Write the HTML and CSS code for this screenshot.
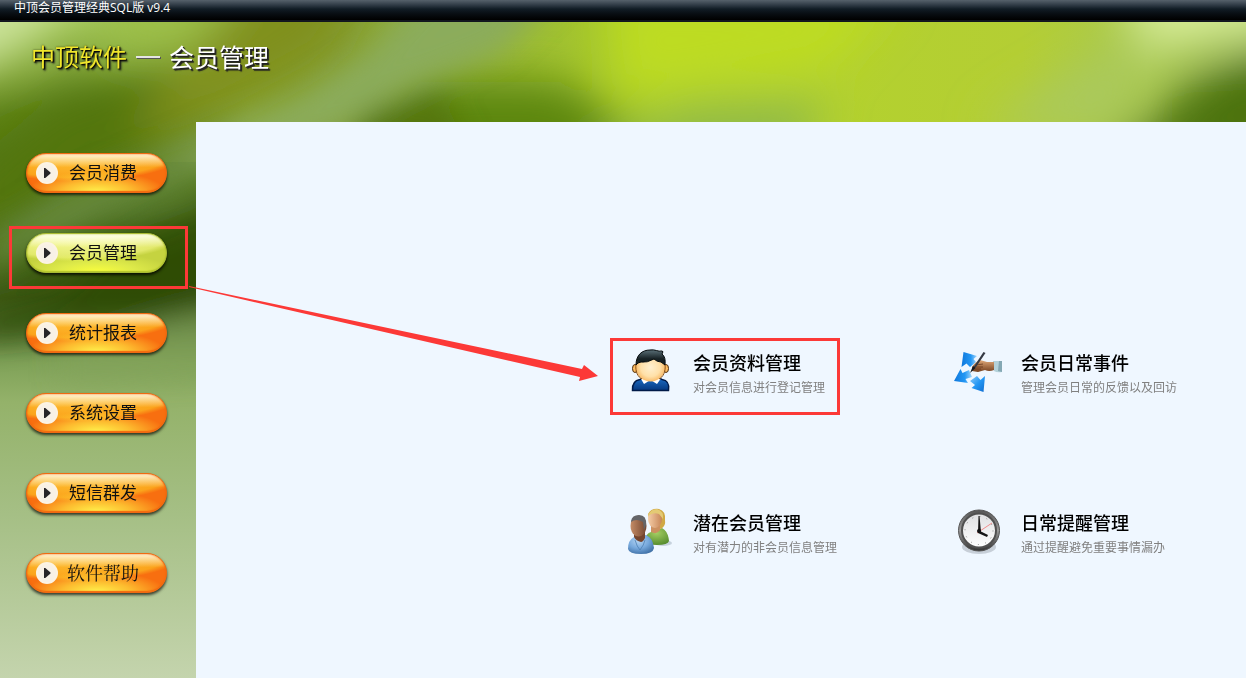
FILE: index.html
```html
<!DOCTYPE html>
<html lang="zh-CN">
  <head>
    <meta charset="UTF-8" />
    <meta name="viewport" content="width=device-width, initial-scale=1.0" />
    <title>中顶会员管理经典SQL版 v9.4</title>
    <link rel="stylesheet" href="styles.css">
  </head>

  <body>
    <div class="titlebar">中顶会员管理经典SQL版 v9.4</div>

    <div class="window">
      <!-- soft green backdrop behind the banner and the menu -->
      <svg class="backdrop" viewBox="0 0 1246 656" preserveAspectRatio="none" aria-hidden="true">
        <defs>
          <linearGradient id="side" x1="0" y1="0" x2="0" y2="1">
            <stop offset="0" stop-color="#9cc050" />
            <stop offset="0.07" stop-color="#83a638" />
            <stop offset="0.14" stop-color="#5f8418" />
            <stop offset="0.2" stop-color="#567a14" />
            <stop offset="0.29" stop-color="#4d7020" />
            <stop offset="0.36" stop-color="#3c5c0c" />
            <stop offset="0.42" stop-color="#3c5814" />
            <stop offset="0.47" stop-color="#5c7c3c" />
            <stop offset="0.52" stop-color="#80a258" />
            <stop offset="0.58" stop-color="#94b26a" />
            <stop offset="0.75" stop-color="#a5bf85" />
            <stop offset="1" stop-color="#c4d4ad" />
          </linearGradient>
          <linearGradient id="top" x1="0" y1="0" x2="1" y2="0">
            <stop offset="0.1" stop-color="#85a02c" stop-opacity="0" />
            <stop offset="0.2" stop-color="#85a02c" />
            <stop offset="0.27" stop-color="#86a036" />
            <stop offset="0.36" stop-color="#92b03c" />
            <stop offset="0.5" stop-color="#a9cb2a" />
            <stop offset="0.62" stop-color="#b3d22c" />
            <stop offset="0.82" stop-color="#b4ce34" />
            <stop offset="0.92" stop-color="#a9c84e" />
            <stop offset="1" stop-color="#86a838" />
          </linearGradient>
          <filter id="b14" x="-50%" y="-50%" width="200%" height="200%"><feGaussianBlur stdDeviation="14" /></filter>
          <filter id="b22" x="-50%" y="-50%" width="200%" height="200%"><feGaussianBlur stdDeviation="22" /></filter>
        </defs>
        <rect width="1246" height="656" fill="url(#side)" />
        <rect width="1246" height="140" fill="url(#top)" />
        <g filter="url(#b22)">
          <path d="M-60 -60H110L30 20L-60 70z" fill="#cbe29a" />
          <path d="M130 -40H300L230 20L100 35z" fill="#9dc048" />
          <path d="M-40 150L60 70L170 45L200 100L100 160L-40 240z" fill="#527610" />
          <path d="M260 -50H370L330 30L220 90L130 120L150 80z" fill="#80901c" />
          <path d="M360 130L420 60L560 60L640 110L600 150H370z" fill="#5c860c" />
          <path d="M600 120L690 85L830 78L790 140H590z" fill="#8fb94a" />
          <path d="M610 -30H900L830 45L620 75z" fill="#bddc22" />
          <path d="M1010 85L1150 5L1130 110H980z" fill="#aac95c" />
          <path d="M1110 -50H1300V15L1150 30z" fill="#d4ea94" />
          <path d="M1200 60L1290 15V140H1100z" fill="#4c7210" />
        </g>
        <g filter="url(#b14)">
          <path d="M425 -30H560L500 30L410 65L330 110L210 150L160 130L300 75L370 30z" fill="#8bac5c" />
          <path d="M330 140L370 90L440 70L470 130z" fill="#54760e" />
          <path d="M240 95L190 165L100 195L-20 260L-10 215L60 170L170 125z" fill="#71914c" opacity="0.700" />
          <path d="M240 170L120 222L60 270L-20 290V320L230 290z" fill="#2a4700" opacity="0.700" />
          <path d="M60 330L230 280V350L60 360z" fill="#83a45c" opacity="0.600" />
        </g>
      </svg>

      <header class="banner">
        <h1><span class="brand">中顶软件</span><span class="dash"></span><span class="module">会员管理</span></h1>
      </header>

      <div class="body">
        <nav class="menu">
          <button type="button"><i class="play"></i><span>会员消费</span></button>
          <button type="button" class="active"><i class="play"></i><span>会员管理</span></button>
          <button type="button"><i class="play"></i><span>统计报表</span></button>
          <button type="button"><i class="play"></i><span>系统设置</span></button>
          <button type="button"><i class="play"></i><span>短信群发</span></button>
          <button type="button" class="help"><i class="play"></i><span>软件帮助</span></button>
          <div class="mark"></div>
        </nav>

        <main class="cards">
          <a class="card marked" href="#profile">
            <svg class="icon" viewBox="0 0 48 48" aria-hidden="true">
              <defs>
                <radialGradient id="face" cx="0.5" cy="0.5" r="0.6">
                  <stop offset="0" stop-color="#fff0d0" />
                  <stop offset="0.55" stop-color="#ffe0a8" />
                  <stop offset="1" stop-color="#f5a848" />
                </radialGradient>
                <linearGradient id="suit" x1="0" y1="0" x2="0" y2="1">
                  <stop offset="0" stop-color="#1c6cc4" />
                  <stop offset="1" stop-color="#04377f" />
                </linearGradient>
                <linearGradient id="hair" x1="0" y1="0" x2="0" y2="1">
                  <stop offset="0" stop-color="#5b7078" />
                  <stop offset="0.6" stop-color="#172124" />
                </linearGradient>
              </defs>
              <path d="M6.500 43.500C6 37 8 33.500 14 32.500L17 31H33L36 32.500C42 33.500 43.500 37 42.500 43.500z" fill="url(#suit)" stroke="#001a48" stroke-width="1.500" />
              <path d="M15 32L18 37L24.500 33L31 37L34.500 32L32 29H18z" fill="#fff" />
              <ellipse cx="9" cy="21.500" rx="2.500" ry="4" fill="#ffbd62" stroke="#4c2c0c" />
              <ellipse cx="40" cy="21.500" rx="2.500" ry="4" fill="#ffbd62" stroke="#4c2c0c" />
              <path d="M10 16C11 8 16 6 24.500 6S38 8 39 16C40 25 36 31 31 33Q25 36 18 33C13 31 9 25 10 16z" fill="url(#face)" />
              <path d="M10 17C9 25 12 30 16 32M39 17C40 25 37 30 33 32" fill="none" stroke="#8a5218" />
              <path d="M10 18C10 8 16 3 24 3C29 2 32 5 36 4Q38 4 36 7Q40 10 39 18L35 15Q31 15 28 12Q21 16 15 15L12 16z" fill="url(#hair)" stroke="#050b0d" />
            </svg>
            <div class="text">
              <h2>会员资料管理</h2>
              <p>对会员信息进行登记管理</p>
            </div>
          </a>

          <a class="card" href="#events">
            <svg class="icon" viewBox="0 0 48 48" aria-hidden="true">
              <defs>
                <linearGradient id="arrow" x1="0" y1="0" x2="1" y2="0">
                  <stop offset="0" stop-color="#0f78dc" />
                  <stop offset="0.6" stop-color="#2397f4" />
                  <stop offset="1" stop-color="#a4d6fa" />
                </linearGradient>
                <linearGradient id="arrowdown" x1="0" y1="0" x2="1" y2="1">
                  <stop offset="0" stop-color="#8fcaf8" />
                  <stop offset="0.5" stop-color="#2397f4" />
                  <stop offset="1" stop-color="#0f6cd0" />
                </linearGradient>
                <linearGradient id="skin" x1="0" y1="0" x2="0" y2="1">
                  <stop offset="0" stop-color="#e0a878" />
                  <stop offset="1" stop-color="#74401f" />
                </linearGradient>
              </defs>
              <path d="M9.500 5L23 9L19.500 12L22 15L16 20L12.500 16.500L7.500 20z" fill="url(#arrow)" />
              <path d="M0 34L6.500 22L8.500 26L15 23L18 30L11.500 32L14 36z" fill="url(#arrow)" />
              <path d="M16 34L23 29L26.500 33L31 29L29.500 45L17.500 41L21 38z" fill="url(#arrowdown)" />
              <path d="M39 14H48V25Q43 26 40 24z" fill="#b4d2da" />
              <path d="M45 14H48V25L44 24z" fill="#84a8b4" />
              <path d="M18 20Q21 15 26 13L33 15L40 15L40 23Q35 25 31 23L24 25L18 24z" fill="url(#skin)" />
              <path d="M22 18L29 17M21 20L29 20M20 22L27 22" stroke="#5e2f16" stroke-width="0.700" fill="none" />
              <path d="M17 24L29.500 5L31.500 6L22 20z" fill="#343943" />
              <path d="M16 26L19 19L21.500 21z" fill="#111820" />
            </svg>
            <div class="text">
              <h2>会员日常事件</h2>
              <p>管理会员日常的反馈以及回访</p>
            </div>
          </a>

          <a class="card" href="#prospects">
            <svg class="icon" viewBox="0 0 48 48" aria-hidden="true">
              <defs>
                <radialGradient id="blue" cx="0.4" cy="0.3" r="0.8">
                  <stop offset="0" stop-color="#b4d4f2" />
                  <stop offset="0.5" stop-color="#76a8dc" />
                  <stop offset="1" stop-color="#37689e" />
                </radialGradient>
                <radialGradient id="green" cx="0.5" cy="0.3" r="0.8">
                  <stop offset="0" stop-color="#a4ce63" />
                  <stop offset="1" stop-color="#4c8427" />
                </radialGradient>
                <linearGradient id="brown" x1="0" y1="0" x2="1" y2="0">
                  <stop offset="0" stop-color="#c48c66" />
                  <stop offset="1" stop-color="#744630" />
                </linearGradient>
                <linearGradient id="peach" x1="0" y1="0" x2="1" y2="0">
                  <stop offset="0" stop-color="#f5cda7" />
                  <stop offset="1" stop-color="#c78658" />
                </linearGradient>
              </defs>
              <ellipse cx="37" cy="36" rx="9" ry="3" fill="#9daebb" opacity="0.500" />
              <path d="M18 35Q20 26 25 25L36 21Q42 24 43 34Q42 38 31 38Q22 38 18 35z" fill="url(#green)" />
              <path d="M22 7Q25 1 33 2Q40 4 39 13Q40 19 35 22L24 17z" fill="#d0a844" />
              <path d="M25 18H34V23Q31 28 25 25z" fill="#cc9060" />
              <ellipse cx="29" cy="12" rx="7" ry="9" fill="url(#peach)" />
              <path d="M22 8Q25 2 31 2Q38 4 37 12L33 7Q27 5 22 9z" fill="#e4ca74" />
              <path d="M2 42Q2 33 8 30L20 28Q27 31 28 41Q27 47 15 47Q3 47 2 42z" fill="url(#blue)" />
              <path d="M8 25H19V31Q17 35 15 35Q10 34 8 30z" fill="#75462f" />
              <ellipse cx="12.500" cy="19" rx="8" ry="10.500" fill="url(#brown)" />
              <path d="M5 14Q6 8 13 8Q21 8 20 18L18 23L17 15Q10 11 5 15z" fill="#646568" />
              <path d="M9 33Q11 40 14 43Q18 38 19 33" fill="none" stroke="#4d80b5" stroke-width="0.800" />
            </svg>
            <div class="text">
              <h2>潜在会员管理</h2>
              <p>对有潜力的非会员信息管理</p>
            </div>
          </a>

          <a class="card" href="#reminders">
            <svg class="icon" viewBox="0 0 48 48" aria-hidden="true">
              <defs>
                <linearGradient id="rim" x1="0" y1="0" x2="0" y2="1">
                  <stop offset="0" stop-color="#555" />
                  <stop offset="0.5" stop-color="#999" />
                  <stop offset="1" stop-color="#333" />
                </linearGradient>
                <linearGradient id="dial" x1="0" y1="0" x2="0" y2="1">
                  <stop offset="0" stop-color="#dfe0e2" />
                  <stop offset="1" stop-color="#fff" />
                </linearGradient>
              </defs>
              <ellipse cx="25" cy="40" rx="17" ry="7" fill="#8c949d" opacity="0.400" />
              <circle cx="25" cy="23.500" r="20.500" fill="url(#rim)" stroke="#555" />
              <circle cx="25" cy="23.500" r="17" fill="url(#dial)" stroke="#505050" stroke-width="2" />
              <circle cx="25" cy="23.500" r="14" fill="none" stroke="#888" stroke-dasharray="1 6.330" />
              <path d="M23 26L38 16" stroke="#ef8d8d" />
              <path d="M24 26L24.500 9H25.500L27 25z" fill="#161616" />
              <path d="M24 23L34 28L33 30L24 26z" fill="#161616" />
              <circle cx="25" cy="24" r="2" fill="#111" />
            </svg>
            <div class="text">
              <h2>日常提醒管理</h2>
              <p>通过提醒避免重要事情漏办</p>
            </div>
          </a>
        </main>
      </div>

      <svg class="pointer" viewBox="0 0 410 98" aria-hidden="true">
        <path d="M1 0L1 1L392 91L391 95L410 90L396 79L394 83z" fill="#fc3937" />
      </svg>
    </div>
  </body>
</html>
```
FILE: styles.css
```css
* {
  box-sizing: border-box;
}

body {
  display: flex;
  flex-direction: column;
  min-height: 100vh;
  margin: 0;
  font-family: "Noto Sans CJK SC", sans-serif;
  color: #000;
}

h1,
h2,
p {
  margin: 0;
  font-weight: normal;
}

.titlebar {
  height: 22px;
  padding-left: 14px;
  border-bottom: 2px solid #12161f;
  background: linear-gradient(#56616b, #303b46 25%, #111c25 45%, #080d12 70%, #000);
  color: #fff;
  font-family: "Open Sans", "Noto Sans CJK SC", sans-serif;
  font-size: 12px;
  line-height: 16px;
}

.window {
  position: relative;
  display: flex;
  flex: 1;
  flex-direction: column;
}

.backdrop {
  position: absolute;
  z-index: -1;
  width: 100%;
  height: 100%;
}

.banner {
  height: 100px;
  padding: 16px 31px;
}

.banner h1 {
  display: flex;
  align-items: center;
  gap: 9px;
  font-size: 24px;
  line-height: 36px;
}

.brand {
  color: #f0e62c;
  text-shadow: 1px 1px 1px #000, 2px 2px 2px #222, 0 0 2px #3a4410;
}

.dash {
  width: 24px;
  height: 2px;
  margin-top: 2px;
  background: #e4e4e4;
  box-shadow: 1px 1px 0 #555;
}

.module {
  color: #fff;
  font-size: 25px;
  text-shadow: 1px 1px 0 #222, 2px 2px 1px #222;
}

.body {
  display: flex;
  flex: 1;
}

.menu {
  position: relative;
  display: flex;
  flex-direction: column;
  gap: 40px;
  width: 196px;
  padding: 31px 29px 31px 26px;
}

.menu button {
  display: flex;
  align-items: center;
  gap: 11px;
  height: 40px;
  padding: 0 0 0 9px;
  border: 1px solid #f06a12;
  border-radius: 20px;
  background:
    linear-gradient(rgba(255, 250, 232, 0.9), transparent 35%),
    radial-gradient(ellipse 50% 55% at 50% 100%, #fff34c, rgba(255, 220, 60, 0.7) 50%, transparent),
    radial-gradient(ellipse 90% 100% at 36% -20%, #fdc649, #fdb92c 45%, #fba41c 82%, transparent 92%),
    #f86f10;
  box-shadow: 0 2px 3px rgba(0, 0, 0, 0.7), inset 0 0 2px #f26a10, inset 0 -1px 1px #f26a10;
  color: #111;
  font-family: inherit;
  font-size: 17px;
  line-height: 24px;
  cursor: pointer;
}

.menu button span {
  padding-bottom: 2px;
}

.menu .active {
  border-color: #a9bb35;
  background:
    linear-gradient(rgba(255, 255, 245, 0.9), transparent 35%),
    radial-gradient(ellipse 55% 50% at 50% 100%, #faff3c, rgba(240, 250, 80, 0.6) 50%, transparent),
    radial-gradient(ellipse 90% 100% at 36% -20%, #fafcae, #f2f690 45%, #e2e96c 82%, transparent 92%),
    #c5d340;
  box-shadow: 0 2px 3px rgba(0, 0, 0, 0.8), inset 0 0 2px #b5c62c, inset 0 -1px 1px #b5c62c;
}

.menu .help {
  gap: 9px;
  font-family: "Noto Serif CJK SC", "Noto Sans CJK SC", serif;
  font-size: 18px;
}

.play {
  display: flex;
  align-items: center;
  justify-content: center;
  width: 22px;
  height: 22px;
  border: 2px solid rgba(255, 245, 225, 0.6);
  border-radius: 50%;
  background: #f8f1e6;
}

.play::before {
  content: "";
  width: 7px;
  height: 10px;
  background: #282528;
  clip-path: polygon(0 0, 25% 0, 100% 45%, 100% 55%, 25% 100%, 0 100%);
}

.mark {
  position: absolute;
  top: 104px;
  left: 9px;
  width: 179px;
  height: 63px;
  border: 3px solid #fc3937;
  pointer-events: none;
}

.cards {
  display: grid;
  flex: 1;
  grid-template-columns: 230px 240px;
  gap: 83px 98px;
  align-content: start;
  justify-content: end;
  padding: 216px 68px 83px 0;
  background: #eff7ff;
}

.card {
  display: flex;
  gap: 19px;
  height: 77px;
  padding: 6px 0 0 13px;
  border: 3px solid transparent;
  color: #000;
  text-decoration: none;
}

.marked {
  border-color: #fc3937;
}

.icon {
  flex: none;
  width: 48px;
  height: 48px;
}

.text {
  padding-top: 3px;
  white-space: nowrap;
}

.card h2 {
  font-size: 18px;
  font-weight: 500;
  line-height: 24px;
}

.card p {
  color: #808080;
  font-size: 12px;
  line-height: 26px;
}

/* red arrow from the menu item to its first card */
.pointer {
  position: absolute;
  top: 264px;
  left: 188px;
  width: 410px;
  height: 98px;
  pointer-events: none;
}
```
